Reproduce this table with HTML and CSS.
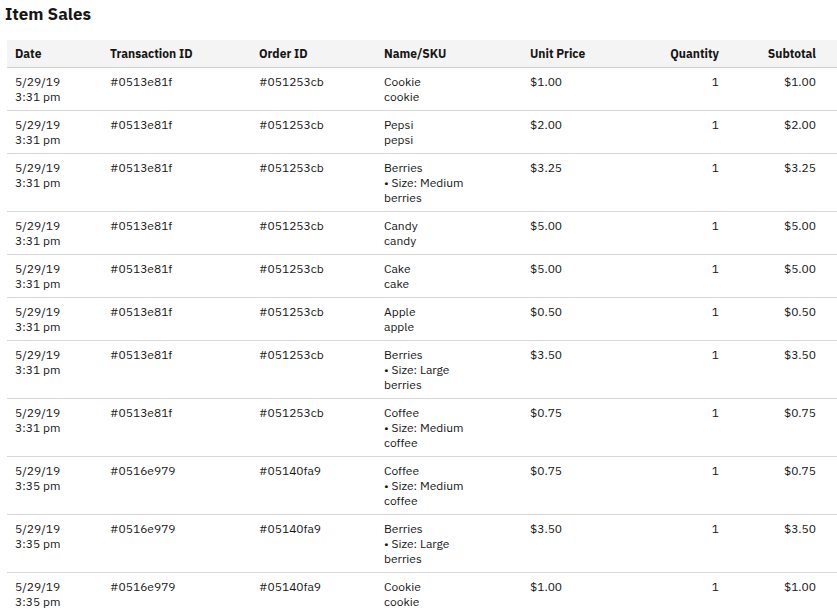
FILE: index.html
```html
<!DOCTYPE html>
<html>
<head>
<meta charset="utf-8">
<link rel="stylesheet" href="styles.css">
</head>
<body>
<div class="page">
  <h1 class="title">Item Sales</h1>
  <table class="sales">
    <colgroup>
      <col class="c-date"><col class="c-txn"><col class="c-order"><col class="c-name"><col class="c-price"><col class="c-qty"><col class="c-sub">
    </colgroup>
    <thead>
      <tr><th>Date</th><th>Transaction ID</th><th>Order ID</th><th>Name/SKU</th><th>Unit Price</th><th class="num">Quantity</th><th class="num last">Subtotal</th></tr>
    </thead>
    <tbody>
      <tr><td>5/29/19<br>3:31 pm</td><td>#0513e81f</td><td>#051253cb</td><td>Cookie<br>cookie</td><td>$1.00</td><td class="num">1</td><td class="num last">$1.00</td></tr>
      <tr><td>5/29/19<br>3:31 pm</td><td>#0513e81f</td><td>#051253cb</td><td>Pepsi<br>pepsi</td><td>$2.00</td><td class="num">1</td><td class="num last">$2.00</td></tr>
      <tr><td>5/29/19<br>3:31 pm</td><td>#0513e81f</td><td>#051253cb</td><td>Berries<br>• Size: Medium<br>berries</td><td>$3.25</td><td class="num">1</td><td class="num last">$3.25</td></tr>
      <tr><td>5/29/19<br>3:31 pm</td><td>#0513e81f</td><td>#051253cb</td><td>Candy<br>candy</td><td>$5.00</td><td class="num">1</td><td class="num last">$5.00</td></tr>
      <tr><td>5/29/19<br>3:31 pm</td><td>#0513e81f</td><td>#051253cb</td><td>Cake<br>cake</td><td>$5.00</td><td class="num">1</td><td class="num last">$5.00</td></tr>
      <tr><td>5/29/19<br>3:31 pm</td><td>#0513e81f</td><td>#051253cb</td><td>Apple<br>apple</td><td>$0.50</td><td class="num">1</td><td class="num last">$0.50</td></tr>
      <tr><td>5/29/19<br>3:31 pm</td><td>#0513e81f</td><td>#051253cb</td><td>Berries<br>• Size: Large<br>berries</td><td>$3.50</td><td class="num">1</td><td class="num last">$3.50</td></tr>
      <tr><td>5/29/19<br>3:31 pm</td><td>#0513e81f</td><td>#051253cb</td><td>Coffee<br>• Size: Medium<br>coffee</td><td>$0.75</td><td class="num">1</td><td class="num last">$0.75</td></tr>
      <tr><td>5/29/19<br>3:35 pm</td><td>#0516e979</td><td>#05140fa9</td><td>Coffee<br>• Size: Medium<br>coffee</td><td>$0.75</td><td class="num">1</td><td class="num last">$0.75</td></tr>
      <tr><td>5/29/19<br>3:35 pm</td><td>#0516e979</td><td>#05140fa9</td><td>Berries<br>• Size: Large<br>berries</td><td>$3.50</td><td class="num">1</td><td class="num last">$3.50</td></tr>
      <tr><td>5/29/19<br>3:35 pm</td><td>#0516e979</td><td>#05140fa9</td><td>Cookie<br>cookie</td><td>$1.00</td><td class="num">1</td><td class="num last">$1.00</td></tr>
    </tbody>
  </table>
</div>
</body>
</html>
```
FILE: styles.css
```css
html, body {
  margin: 0;
  padding: 0;
  background: #ffffff;
}
body {
  font-family: "IBM Plex Sans", "Noto Sans", "Liberation Sans", sans-serif;
  color: #161616;
  overflow: hidden;
}
.page {
  padding: 0 0 0 5px;
}
.title {
  margin: 0;
  padding-top: 3px;
  font-size: 17px;
  line-height: 22px;
  font-weight: 700;
  height: 40px;
  box-sizing: border-box;
}
.sales {
  margin-left: 2px;
  width: 830px;
  table-layout: fixed;
  border-collapse: collapse;
  font-size: 12px;
  line-height: 15px;
}
.c-date { width: 95px; }
.c-txn { width: 149px; }
.c-order { width: 125px; }
.c-name { width: 146px; }
.c-price { width: 98px; }
.c-qty { width: 107px; }
.c-sub { width: 110px; }
.sales th {
  background: #f4f4f4;
  text-align: left;
  font-weight: 700;
  padding: 6px 8px;
  border-bottom: 1px solid #d0d0d0;
  white-space: nowrap;
}
.sales td {
  padding: 6px 8px;
  vertical-align: top;
  border-bottom: 1px solid #d6d6d6;
}
.sales .num { text-align: right; }
.sales .last { padding-right: 21px; }
```
